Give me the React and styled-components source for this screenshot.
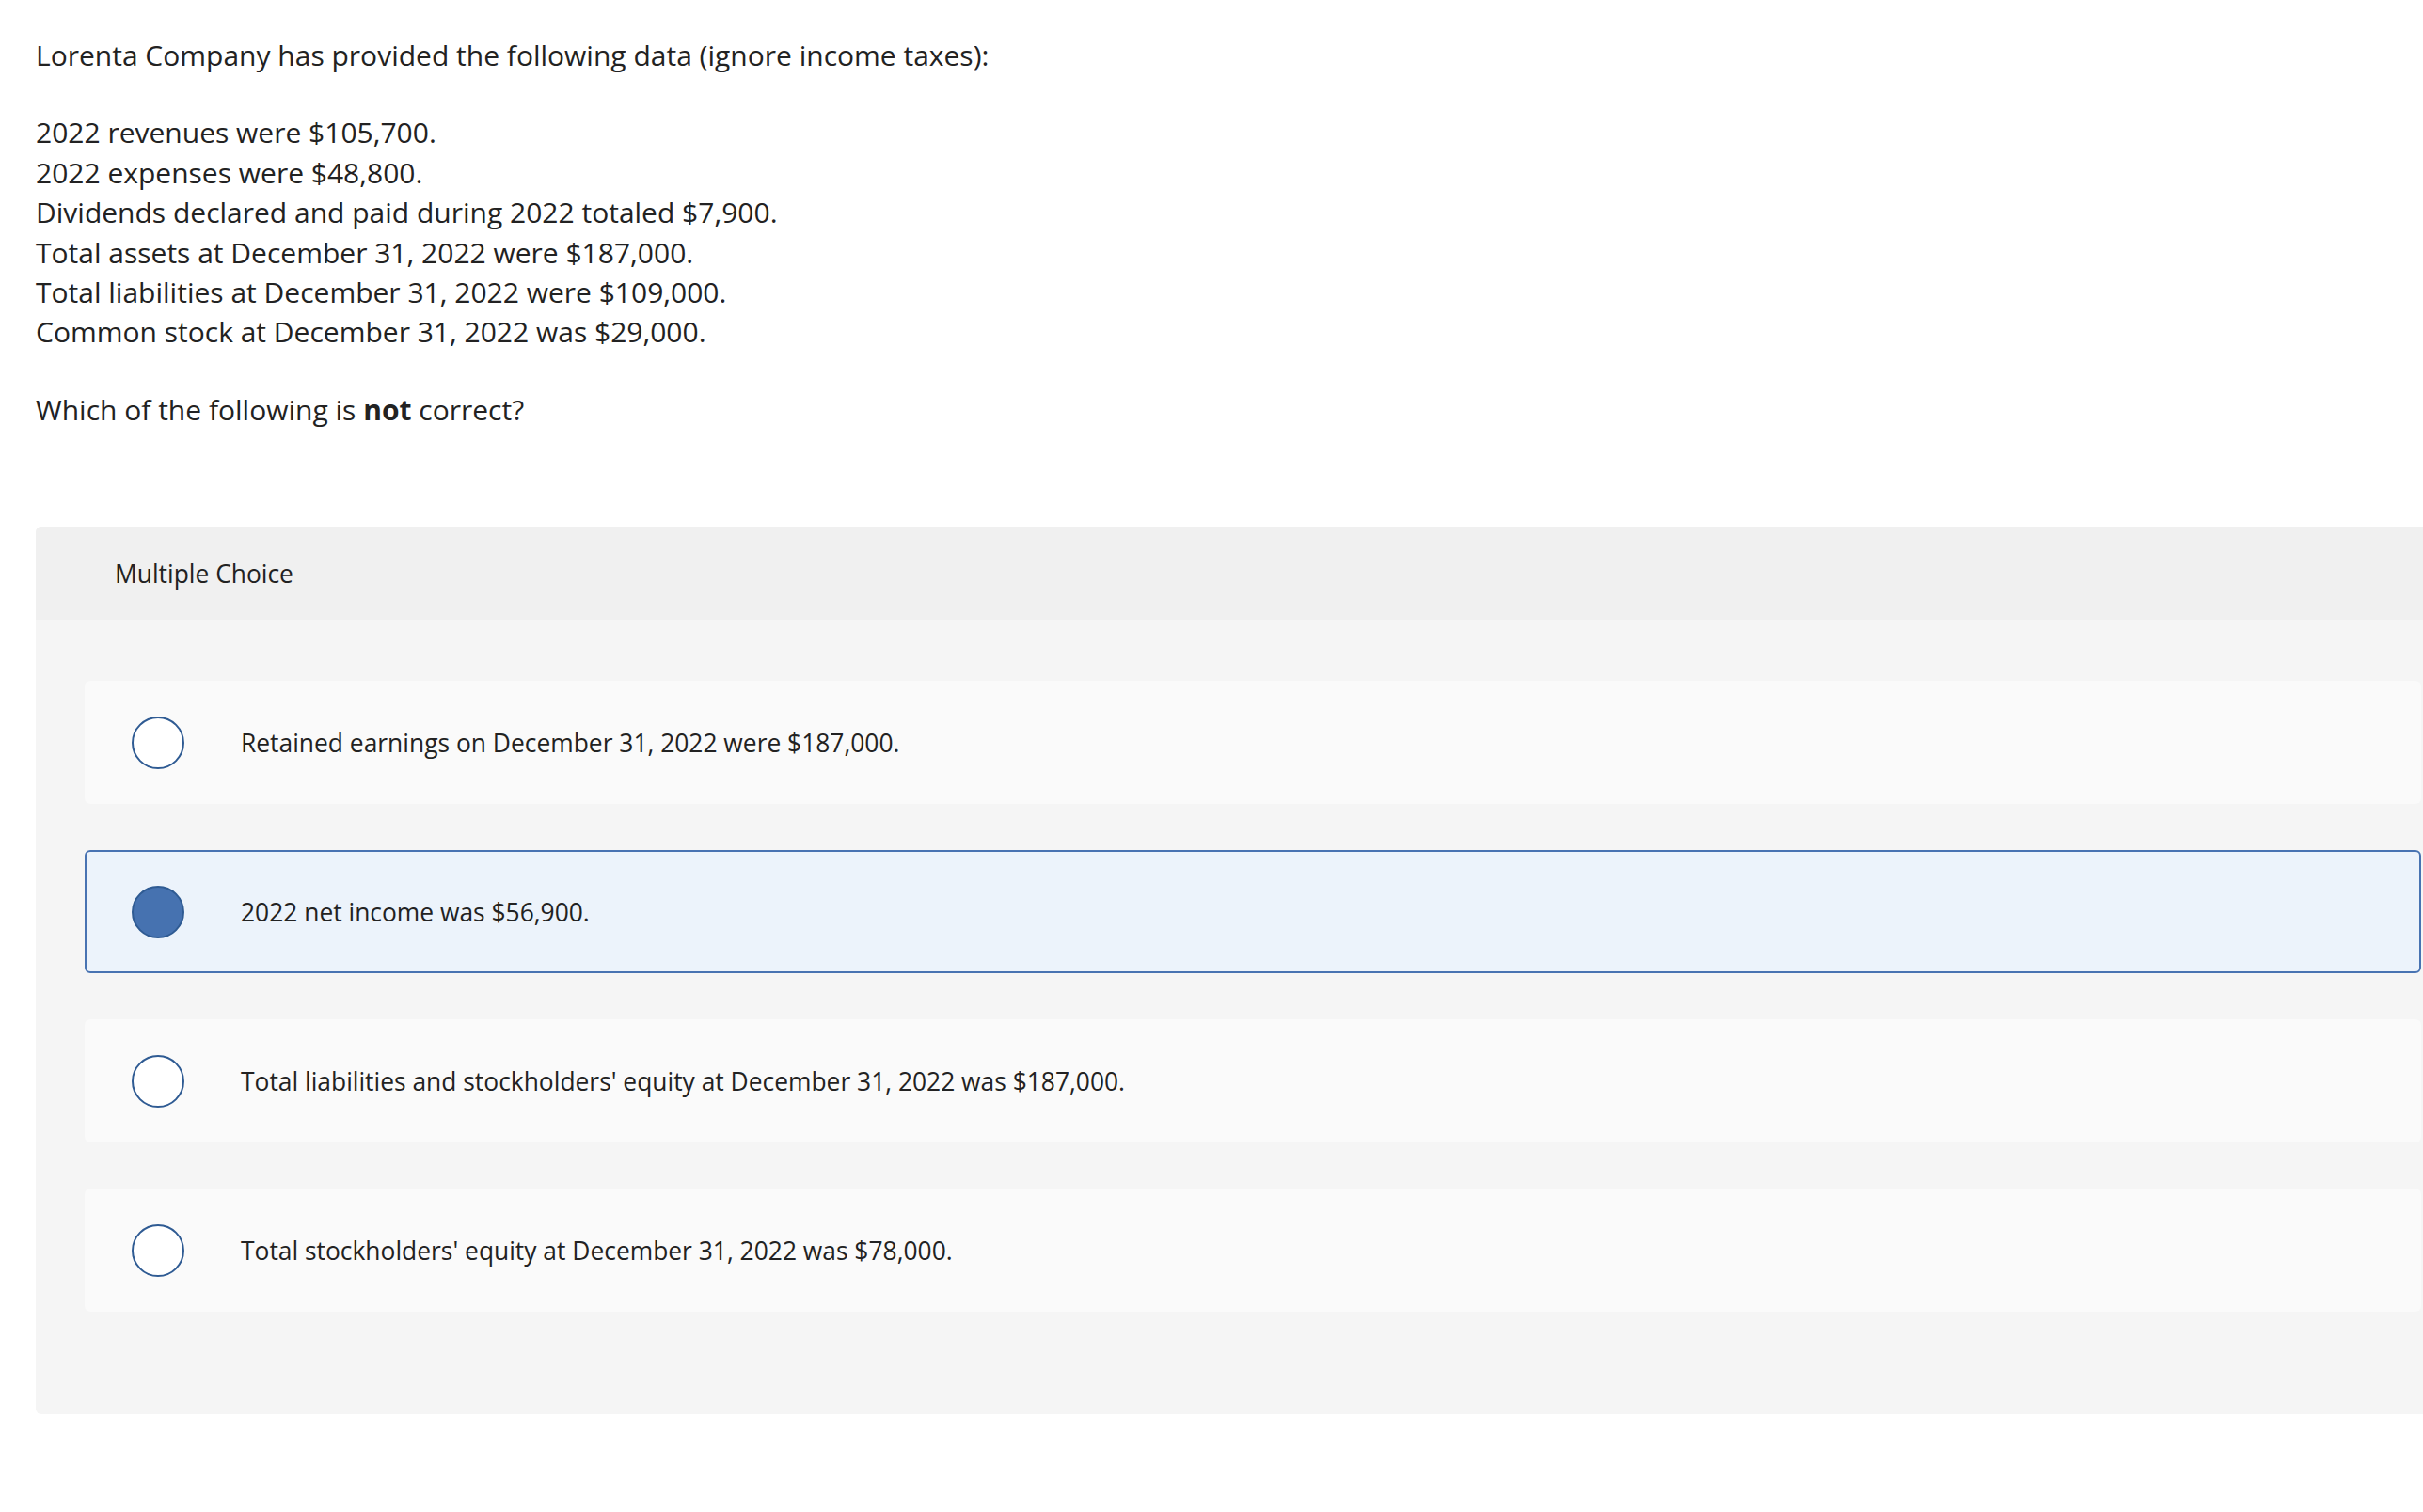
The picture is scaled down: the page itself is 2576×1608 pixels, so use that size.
import React, {useState} from 'react';
import styled, {createGlobalStyle} from 'styled-components';

const GlobalStyle = createGlobalStyle`
    html, body {
        margin: 0;
        padding: 0;
        background: #fff;
        overflow: hidden;
    }
    body {
        font-family: 'Open Sans', 'Liberation Sans', sans-serif;
        color: #222;
    }
`

const Page = styled.main`
    padding: 38px 0 0 38px;
    box-sizing: border-box;
    width: 100%;
`

const Prompt = styled.section`
    font-size: 30px;
    line-height: 42.4px;
    color: #222;
`

const Paragraph = styled.p`
    margin: 0 0 ${props => props.last ? 0 : 40}px 0;
`

const Panel = styled.section`
    margin-top: 103px;
    width: calc(100% + 20px);
    background: #f5f5f5;
    border-radius: 6px;
    overflow: hidden;
`

const PanelHeader = styled.header`
    height: 99px;
    background: #f0f0f0;
    display: flex;
    align-items: center;
    padding-left: 84px;
    font-size: 26.4px;
    color: #222;
`

const Choices = styled.div`
    display: flex;
    flex-flow: column nowrap;
    gap: 49px;
    padding: 65px 22px 109px 52px;
`

const Choice = styled.label`
    height: 131px;
    box-sizing: border-box;
    display: flex;
    align-items: center;
    padding-left: ${props => props.selected ? 48 : 50}px;
    gap: 60px;
    border-radius: 6px;
    background: ${props => props.selected ? '#ecf3fb' : '#fafafa'};
    border: ${props => props.selected ? '2px solid #4873b2' : 'none'};
    cursor: pointer;
    font-size: 26.4px;
    color: #222;
`

const Radio = styled.span`
    width: 56px;
    height: 56px;
    flex: none;
    box-sizing: border-box;
    border-radius: 50%;
    border: 2.5px solid #2f5b93;
    background: ${props => props.checked ? '#4672b0' : '#fff'};
`

const options = [
    'Retained earnings on December 31, 2022 were $187,000.',
    '2022 net income was $56,900.',
    "Total liabilities and stockholders' equity at December 31, 2022 was $187,000.",
    "Total stockholders' equity at December 31, 2022 was $78,000.",
];

const App = () => {
    const [picked, setPicked] = useState(1);
    return <>
        <GlobalStyle/>
        <Page>
            <Prompt>
                <Paragraph>Lorenta Company has provided the following data (ignore income taxes):</Paragraph>
                <Paragraph>
                    2022 revenues were $105,700.<br/>
                    2022 expenses were $48,800.<br/>
                    Dividends declared and paid during 2022 totaled $7,900.<br/>
                    Total assets at December 31, 2022 were $187,000.<br/>
                    Total liabilities at December 31, 2022 were $109,000.<br/>
                    Common stock at December 31, 2022 was $29,000.
                </Paragraph>
                <Paragraph last>Which of the following is <strong>not</strong> correct?</Paragraph>
            </Prompt>
            <Panel>
                <PanelHeader>Multiple Choice</PanelHeader>
                <Choices>
                    {options.map((text, i) => (
                        <Choice key={i} selected={picked === i} onClick={() => setPicked(i)}>
                            <Radio checked={picked === i}/>
                            <span>{text}</span>
                        </Choice>
                    ))}
                </Choices>
            </Panel>
        </Page>
    </>
}

export default App;
